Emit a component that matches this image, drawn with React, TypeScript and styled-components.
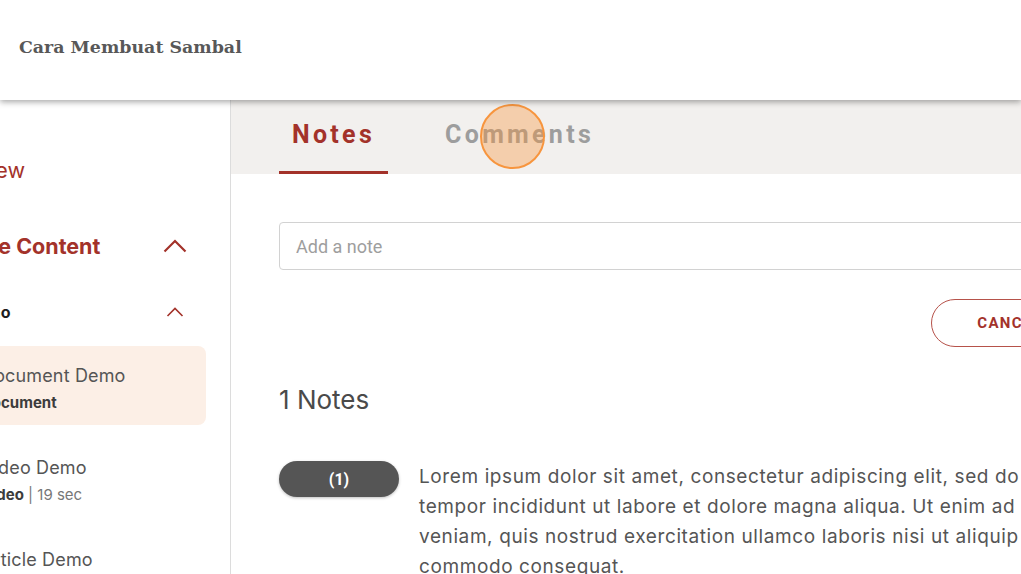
import React from "react";
import styled, { createGlobalStyle } from "styled-components";

const Global = createGlobalStyle`
  html, body { margin: 0; padding: 0; background: #fff; overflow: hidden; }
  body { font-family: Inter, "Noto Sans", sans-serif; }
  * { box-sizing: border-box; }
`;

const RED = "#a3322a";

const Page = styled.div`
  width: 1021px;
  height: 574px;
  overflow: hidden;
  display: flex;
  flex-direction: column;
`;

const Header = styled.header`
  position: relative;
  z-index: 2;
  height: 100px;
  flex: none;
  display: flex;
  align-items: center;
  padding: 0 19px 6px;
  background: #fff;
  box-shadow: 0 2px 6px rgba(0, 0, 0, 0.35);
`;

const Title = styled.h1`
  margin: 0;
  font-family: "DejaVu Serif", serif;
  font-size: 17.4px;
  font-weight: 700;
  color: #585858;
`;

const Body = styled.div`
  flex: 1;
  display: flex;
  min-height: 0;
`;

const Sidebar = styled.aside`
  width: 231px;
  flex: none;
  border-right: 1px solid #dcdcdc;
  overflow: hidden;
`;

const SideInner = styled.div`
  margin-left: -65px;
  padding: 55px 43px 0 0;
  display: flex;
  flex-direction: column;
`;

const TopLink = styled.div<{ $bold?: boolean; $mt?: number; $shift?: number }>`
  display: flex;
  align-items: center;
  justify-content: space-between;
  margin-top: ${(p) => p.$mt ?? 0}px;
  margin-left: ${(p) => p.$shift ?? 0}px;
  font-size: 21.5px;
  line-height: 30px;
  font-weight: ${(p) => (p.$bold ? 700 : 400)};
  color: ${RED};
  white-space: nowrap;
`;

const Section = styled.div`
  display: flex;
  align-items: center;
  justify-content: space-between;
  margin: 39px 0 22px 30px;
  font-size: 16px;
  line-height: 24px;
  font-weight: 700;
  color: #1e1e1e;
`;

const IconBox = styled.span`
  width: 24px;
  height: 24px;
  display: flex;
  align-items: center;
  justify-content: center;
`;

const Items = styled.div`
  margin-left: 30px;
  margin-right: -19px;
  display: flex;
  flex-direction: column;
  gap: 13px;
`;

const Item = styled.div<{ $active?: boolean }>`
  height: 79px;
  padding: 18px 16px 12px;
  border-radius: 8px;
  background: ${(p) => (p.$active ? "#fcefe6" : "transparent")};
  white-space: nowrap;
`;

const ItemTitle = styled.div`
  font-size: 18px;
  line-height: 24px;
  letter-spacing: 0.15px;
  color: #555;
`;

const ItemSub = styled.div`
  margin-top: 5px;
  font-size: 15px;
  line-height: 20px;
  color: #777;
  b { color: #3c3c3c; font-weight: 700; }
`;

const Main = styled.main`
  position: relative;
  flex: 1;
  min-width: 0;
  overflow: hidden;
`;

const TabBar = styled.div`
  height: 74px;
  background: #f2f0ee;
  display: flex;
  gap: 44px;
  padding-left: 48px;
`;

const Tab = styled.div<{ $active?: boolean }>`
  display: flex;
  align-items: center;
  padding: 0 13px 2px;
  font-family: Roboto, sans-serif;
  font-size: 25px;
  font-weight: 700;
  letter-spacing: 3.3px;
  color: ${(p) => (p.$active ? RED : "#9d9d9d")};
  border-bottom: 3px solid ${(p) => (p.$active ? RED : "transparent")};
`;

const Cursor = styled.div`
  position: absolute;
  left: 249px;
  top: 4px;
  width: 65px;
  height: 65px;
  border-radius: 50%;
  border: 2.5px solid #f7953e;
  background: rgba(247, 150, 60, 0.37);
  pointer-events: none;
`;

const Content = styled.div`
  width: 960px;
  margin-left: 48px;
  padding-top: 48px;
`;

const NoteInput = styled.input`
  display: block;
  width: 100%;
  height: 48px;
  padding: 0 16px;
  border: 1px solid #d2d2d2;
  border-radius: 4px;
  font-family: Roboto, sans-serif;
  font-size: 18px;
  color: #333;
  outline: none;
  &::placeholder { color: #9e9e9e; }
`;

const Buttons = styled.div`
  display: flex;
  justify-content: flex-end;
  gap: 16px;
  margin-top: 29px;
`;

const Btn = styled.button<{ $primary?: boolean }>`
  height: 48px;
  padding: 0 45px;
  border-radius: 24px;
  border: 1px solid #b6524a;
  background: ${(p) => (p.$primary ? RED : "#fff")};
  color: ${(p) => (p.$primary ? "#fff" : RED)};
  font-family: Roboto, sans-serif;
  font-size: 15px;
  font-weight: 700;
  letter-spacing: 1.4px;
`;

const CountTitle = styled.h2`
  margin: 37px 0 0;
  font-size: 26px;
  line-height: 32px;
  font-weight: 400;
  color: #4a4a4a;
`;

const NoteRow = styled.div`
  display: flex;
  align-items: flex-start;
  gap: 20px;
  margin-top: 45px;
`;

const Pill = styled.div`
  flex: none;
  width: 120px;
  height: 36px;
  border-radius: 18px;
  background: #555;
  box-shadow: 0 1px 3px rgba(0, 0, 0, 0.25);
  color: #fff;
  display: flex;
  align-items: center;
  justify-content: center;
  font-family: Roboto, sans-serif;
  font-size: 16px;
  font-weight: 700;
`;

const NoteText = styled.p`
  margin: 0;
  padding-top: 1px;
  font-size: 19px;
  line-height: 30px;
  letter-spacing: 0.6px;
  color: #555;
  white-space: nowrap;
`;

const Chevron = ({ big }: { big?: boolean }) =>
  big ? (
    <svg width="24" height="14" viewBox="0 0 24 14">
      <polyline points="1.5,12.5 12,2 22.5,12.5" fill="none" stroke={RED} strokeWidth="2.2" />
    </svg>
  ) : (
    <svg width="18" height="10" viewBox="0 0 18 10">
      <polyline points="1.5,9 9,1.5 16.5,9" fill="none" stroke={RED} strokeWidth="1.6" />
    </svg>
  );

export default function App() {
  return (
    <Page>
      <Global />
      <Header>
        <Title>Cara Membuat Sambal</Title>
      </Header>
      <Body>
        <Sidebar>
          <SideInner>
            <TopLink $shift={-6}>Overview</TopLink>
            <TopLink $bold $mt={46}>
              <span>Course Content</span>
              <IconBox>
                <Chevron big />
              </IconBox>
            </TopLink>
            <Section>
              <span>Demo</span>
              <IconBox>
                <Chevron />
              </IconBox>
            </Section>
            <Items>
              <Item $active>
                <ItemTitle>Document Demo</ItemTitle>
                <ItemSub>
                  <b>Document</b>
                </ItemSub>
              </Item>
              <Item>
                <ItemTitle>Video Demo</ItemTitle>
                <ItemSub>
                  <b>Video</b> | 19 sec
                </ItemSub>
              </Item>
              <Item>
                <ItemTitle>Article Demo</ItemTitle>
                <ItemSub>
                  <b>Article</b>
                </ItemSub>
              </Item>
            </Items>
          </SideInner>
        </Sidebar>
        <Main>
          <TabBar>
            <Tab $active>Notes</Tab>
            <Tab>Comments</Tab>
          </TabBar>
          <Cursor />
          <Content>
            <NoteInput placeholder="Add a note" />
            <Buttons>
              <Btn>CANCEL</Btn>
              <Btn $primary>SAVE</Btn>
            </Buttons>
            <CountTitle>1 Notes</CountTitle>
            <NoteRow>
              <Pill>(1)</Pill>
              <NoteText>
                Lorem ipsum dolor sit amet, consectetur adipiscing elit, sed do eiusmod
                <br />
                tempor incididunt ut labore et dolore magna aliqua. Ut enim ad minim
                <br />
                veniam, quis nostrud exercitation ullamco laboris nisi ut aliquip ex ea
                <br />
                commodo consequat.
              </NoteText>
            </NoteRow>
          </Content>
        </Main>
      </Body>
    </Page>
  );
}
